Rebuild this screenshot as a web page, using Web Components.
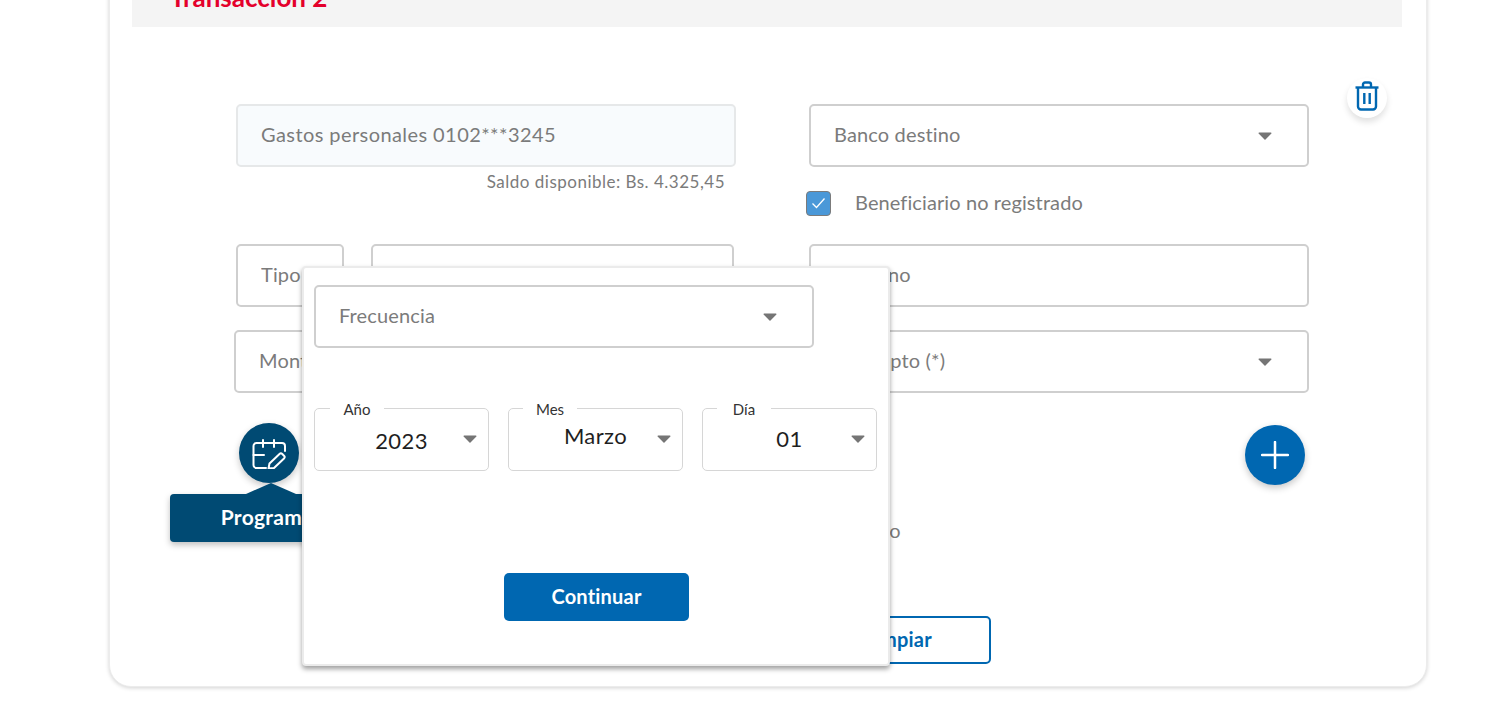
<!DOCTYPE html>
<html lang="es">
<head>
<meta charset="utf-8">
<title>Transacción</title>
<style>
  html, body { margin: 0; height: 705px; overflow: hidden; background: #fff; }
  body { font-family: "Lato", "Noto Sans", sans-serif; color: #7b7b7b; }
  .row { display: flex; gap: 27px; }
  .left-col { display: flex; flex-direction: column; }
  .right-col { display: flex; flex-direction: column; }
  .saldo { align-self: flex-end; margin: 5px 11px 0 0; height: 20px; line-height: 20px; font-size: 17px; letter-spacing: .5px; }
  .mt-52 { margin-top: 52px; }
  .mt-29 { margin-top: 29px; }
  .mt-24 { margin-top: 24px; }
  .mt-23 { margin-top: 23px; }
  .mt-30 { margin-top: 30px; }
  .mt-32 { margin-top: 32px; }
  .favorito { margin: 36px 0 0 19px; height: 22px; line-height: 18px; font-size: 20px; letter-spacing: .15px; }
  .limpiar { margin: 73px 0 0 -4px; }
  .plus { align-self: flex-end; margin-right: 4px; }
  .frecuencia { width: 500px; }
  .dates { display: flex; gap: 19px; margin-top: 60px; }
  .go { align-self: flex-start; width: 185px; margin: 102px 0 0 190px; }
  .monto { margin-left: -2px; width: 502px; }
</style>
</head>
<body>
<template id="field-tpl">
  <style>
  :host {
    box-sizing: border-box;
    display: flex;
    align-items: center;
    height: 63px;
    padding: 0 23px 4px;
    border: 2px solid #cfcfcf;
    border-radius: 5px;
    background: #fff;
    color: #7b7b7b;
    font-size: 20px;
    letter-spacing: var(--field-spacing, .15px);
  }
  :host([filled]) {
    background: #f8fbfd;
    border-color: #e6e8e9;
  }
  .text { flex: 1; white-space: nowrap; overflow: hidden; }
  .arrow { display: none; width: 14px; height: 8px; margin: 4px 12px 0 0; }
  :host([select]) .arrow { display: block; }
  </style>
  <span class="text"><slot></slot></span>
  <svg class="arrow" viewBox="0 0 14 8"><path d="M1 0.5h12a.6.6 0 0 1 .4 1L7.5 7.4a.7.7 0 0 1-1 0L.6 1.5a.6.6 0 0 1 .4-1z" fill="#757575"/></svg>
</template>

<template id="date-tpl">
  <style>
  :host {
    box-sizing: border-box;
    display: block;
    position: relative;
    width: 175px;
    height: 63px;
    padding-top: var(--value-top, 18px);
    border: 1px solid #d6d6d6;
    border-radius: 5px;
    text-align: center;
    font-size: 22px;
    line-height: 26px;
    letter-spacing: .4px;
    color: #1f1f1f;
  }
  .label {
    position: absolute;
    left: var(--label-left, 14px);
    top: -7px;
    width: 54px;
    height: 14px;
    background: #fff;
    text-align: center;
    font-size: 15px;
    line-height: 14px;
    letter-spacing: 0;
    color: #333;
  }
  svg { position: absolute; right: 11px; top: 26px; width: 14px; height: 8px; }
  </style>
  <span class="label" id="lg"></span>
  <slot></slot>
  <svg viewBox="0 0 14 8"><path d="M1 0.5h12a.6.6 0 0 1 .4 1L7.5 7.4a.7.7 0 0 1-1 0L.6 1.5a.6.6 0 0 1 .4-1z" fill="#757575"/></svg>
</template>

<template id="fab-tpl">
  <style>
  :host {
    display: grid;
    place-items: center;
    width: 60px;
    height: 60px;
    border-radius: 50%;
    background: var(--fab-bg, #0067b1);
    box-shadow: 0 3px 7px rgba(0,0,0,.22);
    position: relative;
  }
  </style>
  <slot></slot>
</template>

<template id="tip-tpl">
  <style>
  :host {
    position: absolute;
    left: -69px;
    top: 71px;
    box-sizing: border-box;
    width: 202px;
    height: 48px;
    display: grid;
    place-items: center;
    background: #004a73;
    border-radius: 4px;
    box-shadow: 0 3px 6px rgba(0,0,0,.25);
    color: #fff;
    font-weight: 700;
    font-size: 21px;
    letter-spacing: .3px;
    padding-bottom: 3px;
  }
  svg { position: absolute; left: 75px; top: -11px; width: 52px; height: 11px; }
  </style>
  <svg viewBox="0 0 52 11"><polygon points="26,0 51,11 1,11" fill="#004a73"/></svg>
  <slot></slot>
</template>

<template id="btn-tpl">
  <style>
  :host {
    box-sizing: border-box;
    display: grid;
    place-items: center;
    width: 186px;
    height: 48px;
    padding-bottom: 3px;
    border-radius: 5px;
    background: #0067b1;
    color: #fff;
    font-weight: 700;
    font-size: 20px;
    letter-spacing: .2px;
  }
  :host([outline]) {
    background: #fff;
    color: #0067b1;
    border: 2px solid #0067b1;
  }
  </style>
  <slot></slot>
</template>

<template id="check-tpl">
  <style>
  :host { display: flex; align-items: center; gap: 24px; margin-left: -3px; font-size: 20px; letter-spacing: .1px; color: #7b7b7b; height: 24px; }
  .box { box-sizing: border-box; width: 25px; height: 25px; border: 1.5px solid #7b7b7b; border-radius: 4px; background: #4a98d8; display: grid; place-items: center; }
  svg { width: 15px; height: 12px; }
  .txt { margin-top: -2px; }
  </style>
  <span class="box"><svg viewBox="0 0 15 12"><path d="M1.5 6.5L5.5 10.5L13.5 1.5" fill="none" stroke="#fff" stroke-width="1.3"/></svg></span>
  <span class="txt"><slot></slot></span>
</template>

<template id="popup-tpl">
  <style>
  :host {
    position: absolute;
    left: 192px;
    top: 315px;
    box-sizing: border-box;
    width: 588px;
    height: 400px;
    padding: 17px 10px 0;
    background: #fff;
    border: 2px solid #ebebeb;
    border-radius: 4px;
    box-shadow: 0 3px 5px rgba(0,0,0,.38);
    display: flex;
    flex-direction: column;
    z-index: 5;
  }
  </style>
  <slot></slot>
</template>

<template id="trash-tpl">
  <style>
  :host {
    position: absolute;
    left: 1237px;
    top: 127px;
    width: 40px;
    height: 40px;
    display: grid;
    place-items: center;
    background: #fff;
    border-radius: 50%;
    box-shadow: 0 4px 6px rgba(0,0,0,.12);
  }
  svg { width: 24px; height: 30px; margin-top: -4px; }
  </style>
  <svg viewBox="0 0 24 30" fill="none" stroke="#0067b1" stroke-width="2.4">
    <path d="M0.5 6.5H23.5" />
    <path d="M8 6V3.5a2 2 0 0 1 2-2h4a2 2 0 0 1 2 2V6" />
    <path d="M3 6.5V25.5a3 3 0 0 0 3 3H18a3 3 0 0 0 3-3V6.5" />
    <path d="M9.3 12V23M14.7 12V23" />
  </svg>
</template>

<template id="card-tpl">
  <style>
  :host {
    display: block;
    box-sizing: border-box;
    position: relative;
    width: 1318px;
    height: 737px;
    margin: -50px 0 0 109px;
    padding: 16px 24px 0 22px;
    background: #fff;
    border: 1px solid #ececec;
    border-radius: 22px;
    box-shadow: 0 1px 4px rgba(0,0,0,.18);
  }
  .head {
    display: flex;
    align-items: center;
    justify-content: space-between;
    height: 60px;
    padding: 0 29px 0 38px;
    background: #f4f4f4;
    color: #e4002b;
    font-size: 26px;
    font-weight: 700;
  }
  .head svg { width: 14px; height: 8px; margin-top: -2px; }
  .form {
    display: grid;
    grid-template-columns: 500px 500px;
    column-gap: 73px;
    margin: 77px 0 0 104px;
  }
  </style>
  <div class="head">
    <span><slot name="title"></slot></span>
    <svg viewBox="0 0 14 8"><path d="M1 1L7 7L13 1" fill="none" stroke="#666" stroke-width="2"/></svg>
  </div>
  <div class="form"><slot></slot></div>
</template>

<x-card>
  <span slot="title">Transacción 2</span>

  <div class="left-col">
    <x-field filled style="--field-spacing:.42px">Gastos personales 0102***3245</x-field>
    <div class="saldo">Saldo disponible: Bs. 4.325,45</div>
    <div class="row mt-52">
      <x-field style="width:108px">Tipo</x-field>
      <x-field style="width:363px"></x-field>
    </div>
    <x-field class="mt-23 monto">Monto</x-field>
    <x-fab class="mt-30" style="--fab-bg:#004a73; margin-left:3px">
      <svg width="34" height="32" viewBox="0 0 34 32" fill="none" stroke="#fff" stroke-width="2" stroke-linecap="round" stroke-linejoin="round">
        <path d="M14 31H4.500a3 3 0 0 1-3-3V9a3 3 0 0 1 3-3H30a3 3 0 0 1 3 3V14"/>
        <path d="M11 3V10M22 3V10"/>
        <path d="M1.500 18H12"/>
        <path d="M16.500 31.500L17.500 26.500L27.500 17a2 2 0 0 1 2.800 0L32 18.700a2 2 0 0 1 0 2.800L22 31L16.500 31.500z"/>
      </svg>
      <x-tip>Programar</x-tip>
    </x-fab>
  </div>

  <div class="right-col">
    <x-field select>Banco destino</x-field>
    <x-check class="mt-24">Beneficiario no registrado</x-check>
    <x-field class="mt-29">Teléfono</x-field>
    <x-field class="mt-23" select>Concepto (*)</x-field>
    <x-fab class="mt-32 plus">
      <svg width="28" height="28" viewBox="0 0 28 28" fill="none" stroke="#fff" stroke-width="2.500" stroke-linecap="round"><path d="M14 1V27M1 14H27"/></svg>
    </x-fab>
    <div class="favorito">Favorito</div>
    <x-btn class="limpiar" outline>Limpiar</x-btn>
  </div>

  <x-trash></x-trash>

  <x-popup>
    <x-field select class="frecuencia">Frecuencia</x-field>
    <div class="dates">
      <x-date label="Año" style="--value-top:19px; --label-left:15px">2023</x-date>
      <x-date label="Mes" style="--value-top:14px">Marzo</x-date>
      <x-date label="Día" style="--value-top:17px">01</x-date>
    </div>
    <x-btn class="go">Continuar</x-btn>
  </x-popup>
</x-card>

<script>
/**
 * Element whose shadow root is a plain clone of a page template.
 */
class TemplateElement extends HTMLElement {
  constructor (id) {
    super();
    this._shadowRoot = this.attachShadow({mode: 'open'});
    this._shadowRoot.appendChild(document.getElementById(id).content.cloneNode(true));
  }
}

class XCard extends TemplateElement { constructor () { super('card-tpl'); } }
class XField extends TemplateElement { constructor () { super('field-tpl'); } }
class XFab extends TemplateElement { constructor () { super('fab-tpl'); } }
class XTip extends TemplateElement { constructor () { super('tip-tpl'); } }
class XBtn extends TemplateElement { constructor () { super('btn-tpl'); } }
class XCheck extends TemplateElement { constructor () { super('check-tpl'); } }
class XPopup extends TemplateElement { constructor () { super('popup-tpl'); } }
class XTrash extends TemplateElement { constructor () { super('trash-tpl'); } }

class XDate extends TemplateElement {
  constructor () { super('date-tpl'); }
  connectedCallback () {
    this._shadowRoot.getElementById('lg').textContent = this.getAttribute('label');
  }
}

customElements.define('x-card', XCard);
customElements.define('x-field', XField);
customElements.define('x-fab', XFab);
customElements.define('x-tip', XTip);
customElements.define('x-btn', XBtn);
customElements.define('x-check', XCheck);
customElements.define('x-popup', XPopup);
customElements.define('x-trash', XTrash);
customElements.define('x-date', XDate);
</script>
</body>
</html>
